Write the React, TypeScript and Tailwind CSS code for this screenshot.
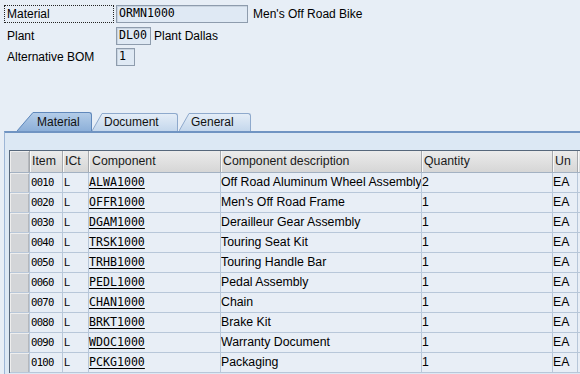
import React from "react";

const rows = [
  ["0010", "L", "ALWA1000", "Off Road Aluminum Wheel Assembly", "2", "EA"],
  ["0020", "L", "OFFR1000", "Men's Off Road Frame", "1", "EA"],
  ["0030", "L", "DGAM1000", "Derailleur Gear Assembly", "1", "EA"],
  ["0040", "L", "TRSK1000", "Touring Seat Kit", "1", "EA"],
  ["0050", "L", "TRHB1000", "Touring Handle Bar", "1", "EA"],
  ["0060", "L", "PEDL1000", "Pedal Assembly", "1", "EA"],
  ["0070", "L", "CHAN1000", "Chain", "1", "EA"],
  ["0080", "L", "BRKT1000", "Brake Kit", "1", "EA"],
  ["0090", "L", "WDOC1000", "Warranty Document", "1", "EA"],
  ["0100", "L", "PCKG1000", "Packaging", "1", "EA"],
];

const mono = "font-['DejaVu_Sans_Mono','Liberation_Mono',monospace]";

function Field({ value, w }: { value: string; w: string }) {
  return (
    <div
      className={`${w} h-[18px] border border-[#8e9cad] bg-[#dfe9f4] shadow-[inset_1px_1px_0_#c9d4e0] pl-[2px] flex items-center ${mono} text-[11.6px] text-black`}
    >
      {value}
    </div>
  );
}

function Slant({ w, h, active }: { w: number; h: number; active: boolean }) {
  const id = active ? "ga" : "gi";
  return (
    <svg width={w} height={h} className="block shrink-0">
      <defs>
        <linearGradient id={id} x1="0" y1="0" x2="0" y2="1">
          <stop offset="0" stopColor={active ? "#b3cce8" : "#e4edf7"} />
          <stop offset="1" stopColor={active ? "#8db0d9" : "#c4d7ec"} />
        </linearGradient>
      </defs>
      <polygon points={`0,${h} ${w},0 ${w},${h}`} fill={`url(#${id})`} />
      <line
        x1="0"
        y1={h}
        x2={w}
        y2="0.5"
        stroke={active ? "#6088bb" : "#8ea9cc"}
        strokeWidth="1"
      />
    </svg>
  );
}

function Tabs() {
  return (
    <div className="flex items-end h-[19px] ml-[17px]">
      <div className="flex items-end h-[19px]">
        <Slant w={16} h={19} active />
        <div className="h-[19px] w-[59px] border-t border-r border-[#6088bb] rounded-tr-[3px] bg-linear-to-b from-[#b3cce8] to-[#8db0d9] pl-[4px] leading-[18px] text-[12px] text-[#111]">
          Material
        </div>
      </div>
      <div className="flex items-end h-[18px]">
        <Slant w={10} h={18} active={false} />
        <div className="h-[18px] w-[76px] border-t border-r border-[#8ea9cc] rounded-tr-[3px] bg-linear-to-b from-[#e4edf7] to-[#c4d7ec] pl-[2px] leading-[17px] text-[12px] text-[#111]">
          Document
        </div>
      </div>
      <div className="flex items-end h-[18px] ml-[1px]">
        <Slant w={10} h={18} active={false} />
        <div className="h-[18px] w-[62px] border-t border-r border-[#8ea9cc] rounded-tr-[3px] bg-linear-to-b from-[#e4edf7] to-[#c4d7ec] pl-[2px] leading-[17px] text-[12px] text-[#111]">
          General
        </div>
      </div>
    </div>
  );
}

const selector =
  "w-[19px] shrink-0 bg-[#d3d5d8] shadow-[inset_1px_1px_0_#eeeeee,inset_-1px_0_0_#b5b8bd]";

export default function App() {
  return (
    <div className="w-[580px] h-[374px] overflow-hidden bg-[#e7eef6] flex flex-col font-['Liberation_Sans',Arial,sans-serif] text-[12px] text-black">
      <div className="pt-[5px] pl-[4px] flex flex-col">
        <div className="flex items-center h-[18px]">
          <div className="w-[110px] h-[18px] border border-dotted border-[#222] pl-[2px] flex items-center">
            Material
          </div>
          <div className="ml-[2px]">
            <Field value="ORMN1000" w="w-[132px]" />
          </div>
          <span className="ml-[5px]">Men's Off Road Bike</span>
        </div>
        <div className="flex items-center h-[18px] mt-[4px]">
          <div className="w-[112px] pl-[3px]">Plant</div>
          <Field value="DL00" w="w-[35px]" />
          <span className="ml-[3px]">Plant Dallas</span>
        </div>
        <div className="flex items-center h-[18px] mt-[3px]">
          <div className="w-[112px] pl-[3px]">Alternative BOM</div>
          <Field value="1" w="w-[19px]" />
        </div>
      </div>

      <div className="mt-[46px]">
        <Tabs />
      </div>

      <div className="flex-1 ml-[4px] border-t-2 border-t-[#7094c2] border-l border-l-[#9db6d6] bg-[#dce8f4] pt-[17px] pl-[4px]">
        <div className="border-t border-l border-[#56677b] bg-[#e8eef6] w-[700px] text-[12.3px]">
          <div className="flex h-[22px] border-b border-[#a3b1c2] text-[#1a1a1a]">
            <div className={selector} />
            {[
              ["Item", "w-[33px]", "pl-[2px]"],
              ["ICt", "w-[26px]", "pl-[2px]"],
              ["Component", "w-[132px]", "pl-[3px]"],
              ["Component description", "w-[201px]", "pl-[2px]"],
              ["Quantity", "w-[131px]", "pl-[2px]"],
              ["Un", "w-[25px]", "pl-[2px]"],
              ["", "w-[120px]", "pl-[2px]"],
            ].map(([label, w, pl], i) => (
              <div
                key={i}
                className={`${w} ${pl} shrink-0 border-l border-[#a6a9ad] bg-linear-to-b from-[#ebebeb] to-[#d6d6d6] shadow-[inset_1px_0_0_#f7f7f7] leading-[21px] whitespace-nowrap overflow-hidden`}
              >
                {label}
              </div>
            ))}
          </div>
          {rows.map((r) => (
            <div key={r[0]} className="flex h-[20px] border-b border-[#b8c7d9]">
              <div className={selector} />
              <div className={`w-[33px] shrink-0 border-l border-[#b8c7d9] pl-[1px] leading-[19px] ${mono} text-[10.6px] tracking-[-0.7px]`}>
                {r[0]}
              </div>
              <div className="w-[26px] shrink-0 border-l border-[#b8c7d9] pl-[1px] leading-[19px] text-[11px]">
                {r[1]}
              </div>
              <div className={`w-[132px] shrink-0 border-l border-[#b8c7d9] pl-[0px] leading-[19px] ${mono} text-[11.6px]`}>
                <span className="underline underline-offset-2">{r[2]}</span>
              </div>
              <div className="w-[201px] shrink-0 border-l border-[#b8c7d9] pl-[0px] leading-[19px] whitespace-nowrap overflow-hidden">
                {r[3]}
              </div>
              <div className="w-[131px] shrink-0 border-l border-[#b8c7d9] pl-[0px] leading-[19px]">
                {r[4]}
              </div>
              <div className="w-[25px] shrink-0 border-l border-[#b8c7d9] pl-[0px] leading-[19px]">
                {r[5]}
              </div>
              <div className="w-[120px] shrink-0 border-l border-[#b8c7d9]" />
            </div>
          ))}
        </div>
      </div>
    </div>
  );
}
